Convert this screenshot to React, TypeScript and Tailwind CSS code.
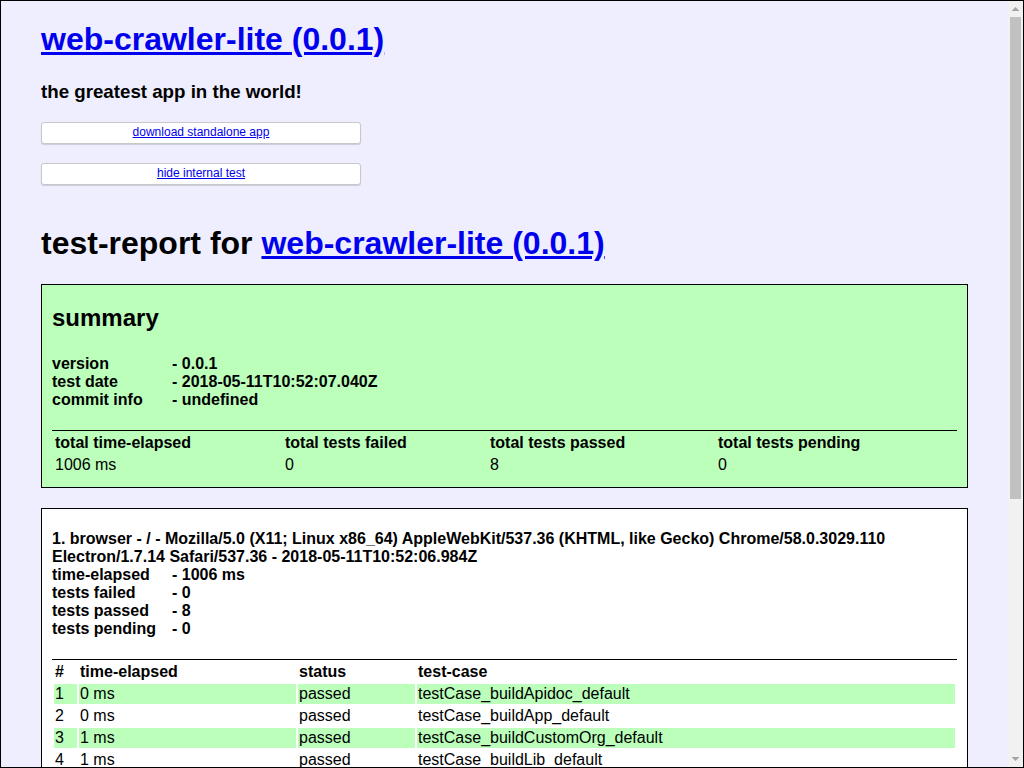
const summaryStats = [
  { label: 'total time-elapsed', value: '1006 ms', width: 'w-[228px]' },
  { label: 'total tests failed', value: '0', width: 'w-[203px]' },
  { label: 'total tests passed', value: '8', width: 'w-[226px]' },
  { label: 'total tests pending', value: '0', width: 'w-auto' },
];

const testCases = [
  { elapsed: '0 ms', status: 'passed', name: 'testCase_buildApidoc_default' },
  { elapsed: '0 ms', status: 'passed', name: 'testCase_buildApp_default' },
  { elapsed: '1 ms', status: 'passed', name: 'testCase_buildCustomOrg_default' },
  { elapsed: '1 ms', status: 'passed', name: 'testCase_buildLib_default' },
  { elapsed: '0 ms', status: 'passed', name: 'testCase_buildReadme_default' },
  { elapsed: '1 ms', status: 'passed', name: 'testCase_buildTest_default' },
  { elapsed: '1003 ms', status: 'passed', name: 'testCase_webpage_default' },
  { elapsed: '0 ms', status: 'passed', name: 'testCase_webCrawler_default' },
];

function InfoRows({ rows }: { rows: [string, string][] }) {
  return (
    <div className="grid grid-cols-[120px_1fr] font-bold">
      {rows.map(([label, value]) => (
        <div key={label} className="contents">
          <div>{label}</div>
          <div>- {value}</div>
        </div>
      ))}
    </div>
  );
}

function LinkButton({ label }: { label: string }) {
  return (
    <button className="block h-[22px] w-[320px] rounded-[3px] border border-[#c8c8c8] bg-white pb-[2px] text-center text-xs shadow-[0_1px_1px_rgba(0,0,0,0.15)]">
      <a href="#" className="text-[#0000ee] underline">
        {label}
      </a>
    </button>
  );
}

// classic grey window scrollbar on the right edge
function Scrollbar() {
  return (
    <div className="flex w-[15px] shrink-0 flex-col bg-[#f1f1f1]">
      <div className="h-[16px]">
        <svg width="15" height="16" viewBox="0 0 15 16">
          <polygon points="3.5,10 7.5,6 11.5,10" fill="#a3a3a3" />
        </svg>
      </div>
      <div className="mx-[2px] h-[482px] bg-[#c1c1c1]" />
      <div className="flex-1" />
      <div className="h-[16px]">
        <svg width="15" height="16" viewBox="0 0 15 16">
          <polygon points="3.5,6 11.5,6 7.5,10" fill="#a3a3a3" />
        </svg>
      </div>
    </div>
  );
}

export default function App() {
  return (
    <div className="flex h-[768px] overflow-hidden border border-black bg-[#eeeeff] font-['Liberation_Sans',Arial,sans-serif] text-base leading-[normal] text-black">
      <div className="min-w-0 flex-1 overflow-hidden px-[40px] pt-[20px]">
        <h1 className="text-[32px] font-bold">
          <a href="#" className="text-[#0000ee] underline">
            web-crawler-lite (0.0.1)
          </a>
        </h1>
        <h3 className="mt-[23px] text-[18.72px] font-bold">the greatest app in the world!</h3>

        <div className="mt-[19px] flex flex-col gap-[19px]">
          <LinkButton label="download standalone app" />
          <LinkButton label="hide internal test" />
        </div>

        <h1 className="mt-[40px] text-[32px] font-bold">
          test-report for{' '}
          <a href="#" className="text-[#0000ee] underline">
            web-crawler-lite (0.0.1)
          </a>
        </h1>

        <div className="mt-[22px] border border-black bg-[#bbffbb] p-[10px]">
          <h2 className="mt-[7px] text-2xl font-bold">summary</h2>
          <div className="mt-[21px]">
            <InfoRows
              rows={[
                ['version', '0.0.1'],
                ['test date', '2018-05-11T10:52:07.040Z'],
                ['commit info', 'undefined'],
              ]}
            />
          </div>
          <table className="mt-[21px] w-full table-fixed border-separate border-spacing-[2px] border-t border-black">
            <thead>
              <tr>
                {summaryStats.map((s) => (
                  <th key={s.label} className={`${s.width} p-[1px] text-left font-bold`}>
                    {s.label}
                  </th>
                ))}
              </tr>
            </thead>
            <tbody>
              <tr>
                {summaryStats.map((s) => (
                  <td key={s.label} className="p-[1px]">
                    {s.value}
                  </td>
                ))}
              </tr>
            </tbody>
          </table>
        </div>

        <div className="mt-[20px] border border-black bg-white p-[10px]">
          <div className="mt-[11px] font-bold">
            1. browser - / - Mozilla/5.0 (X11; Linux x86_64) AppleWebKit/537.36 (KHTML, like Gecko)
            Chrome/58.0.3029.110 Electron/1.7.14 Safari/537.36 - 2018-05-11T10:52:06.984Z
          </div>
          <InfoRows
            rows={[
              ['time-elapsed', '1006 ms'],
              ['tests failed', '0'],
              ['tests passed', '8'],
              ['tests pending', '0'],
            ]}
          />
          <table className="mt-[21px] w-full table-fixed border-separate border-spacing-[2px] border-t border-black">
            <thead>
              <tr>
                <th className="w-[23px] p-[1px] text-left font-bold">#</th>
                <th className="w-[217px] p-[1px] text-left font-bold">time-elapsed</th>
                <th className="w-[117px] p-[1px] text-left font-bold">status</th>
                <th className="p-[1px] text-left font-bold">test-case</th>
              </tr>
            </thead>
            <tbody>
              {testCases.map((t, i) => {
                const cell = i % 2 === 0 ? 'p-[1px] bg-[#bbffbb]' : 'p-[1px]';
                return (
                  <tr key={t.name}>
                    <td className={cell}>{i + 1}</td>
                    <td className={cell}>{t.elapsed}</td>
                    <td className={cell}>{t.status}</td>
                    <td className={cell}>{t.name}</td>
                  </tr>
                );
              })}
            </tbody>
          </table>
        </div>
      </div>
      <Scrollbar />
    </div>
  );
}
